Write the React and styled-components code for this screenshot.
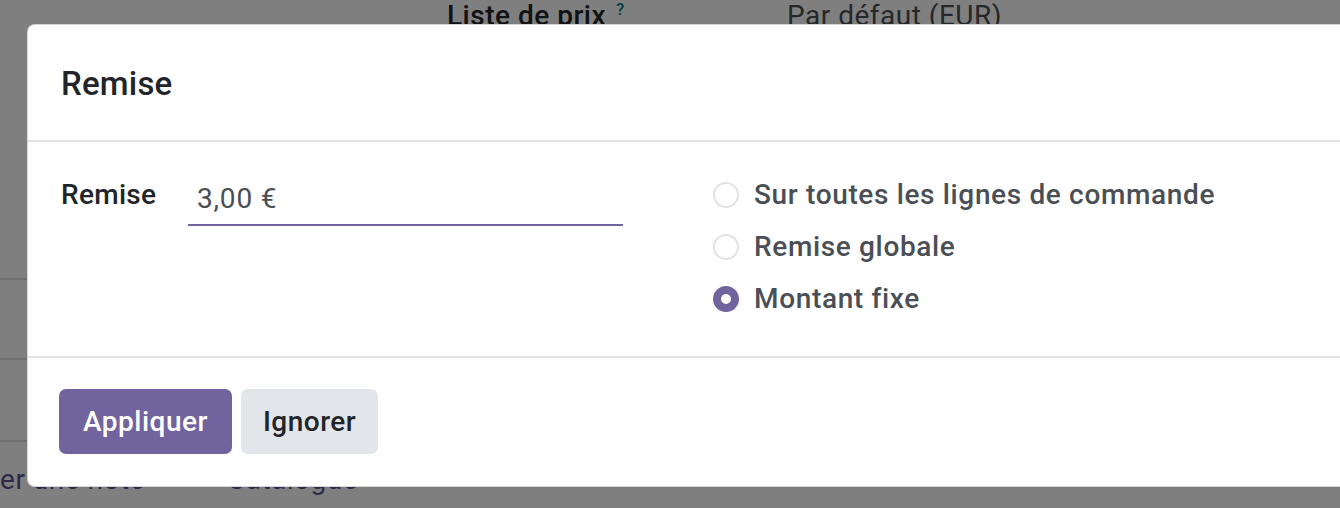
import React from 'react';
import styled, { createGlobalStyle } from 'styled-components';

const Global = createGlobalStyle`
  html, body {
    margin: 0;
    padding: 0;
    width: 1340px;
    height: 508px;
    overflow: hidden;
    background: #fff;
    font-family: Roboto, "Noto Sans", Arial, sans-serif;
  }
  * { box-sizing: border-box; }
`;

const Page = styled.div`
  position: relative;
  width: 1340px;
  height: 508px;
  overflow: hidden;
  background: #fff;
`;

/* ---------- underlying form (dimmed by the backdrop) ---------- */
const Sheet = styled.div`
  display: flex;
  flex-direction: column;
  margin-top: -5px;
  margin-left: -68px;
  width: 1500px;
  font-size: 28px;
  line-height: 42px;
  letter-spacing: 0.5px;
`;

const FieldRow = styled.div`
  display: grid;
  grid-template-columns: 340px 1fr;
  padding-left: 515px;
`;

const FieldLabel = styled.div`
  font-weight: 500;
  color: #212529;
  white-space: nowrap;
`;

const Help = styled.sup`
  font-size: 17px;
  font-weight: 500;
  color: #017e84;
  margin-left: 10px;
  vertical-align: top;
  line-height: 1;
  position: relative;
  top: 6px;
`;

const FieldValue = styled.div`
  color: #4a4f55;
  white-space: nowrap;
`;

const Lines = styled.div`
  margin-top: 241px;
  display: flex;
  flex-direction: column;
`;

const LineRow = styled.div`
  height: ${p => p.$h}px;
  border-top: 2px solid #dee2e6;
`;

const AddRow = styled.div`
  border-top: 2px solid #dee2e6;
  padding-top: 17px;
  display: flex;
  gap: 82px;
`;

const AddLink = styled.span`
  color: #5f5390;
  white-space: nowrap;
`;

const Backdrop = styled.div`
  position: absolute;
  inset: 0;
  background: rgba(0, 0, 0, 0.5);
`;

/* ---------- dialog ---------- */
const Dialog = styled.div`
  position: absolute;
  left: 27px;
  top: 24px;
  width: 1420px;
  background: #fff;
  border: 1px solid rgba(0, 0, 0, 0.16);
  border-radius: 8px;
  overflow: hidden;
  display: flex;
  flex-direction: column;
`;

const Header = styled.div`
  padding: 39px 33px 36px;
  border-bottom: 2px solid #dee2e6;
`;

const Title = styled.h4`
  margin: 0;
  font-size: 33px;
  line-height: 40px;
  font-weight: 500;
  color: #212529;
  letter-spacing: 0.2px;
`;

const Body = styled.div`
  display: flex;
  padding: 32px 33px 36px;
  font-size: 28px;
  line-height: 42px;
`;

const Group = styled.div`
  display: grid;
  grid-template-columns: 127px 435px;
  align-items: start;
  margin-right: 90px;
`;

const Label = styled.label`
  font-weight: 500;
  color: #212529;
  letter-spacing: 0.3px;
`;

const Input = styled.div`
  padding: 4px 9px;
  border-bottom: 2px solid #71639e;
  color: #4a4f55;
  font-weight: 400;
  letter-spacing: 0.8px;
`;

const RadioList = styled.div`
  display: flex;
  flex-direction: column;
  gap: 10px;
`;

const RadioItem = styled.div`
  display: flex;
  align-items: center;
  gap: 15px;
  color: #4a4f55;
  font-weight: 500;
  letter-spacing: 0.65px;
  white-space: nowrap;
`;

const RadioCircle = styled.span`
  width: 26px;
  height: 26px;
  border-radius: 50%;
  flex: none;
  background: #fff;
  border: ${p => (p.$checked ? '8px solid #71639e' : '2px solid #e0e3e6')};
`;

const Footer = styled.div`
  display: flex;
  gap: 9px;
  padding: 31px 31px 32px;
  border-top: 2px solid #dee2e6;
`;

const Button = styled.button`
  height: 65px;
  padding: 0 ${p => (p.$primary ? 24 : 22)}px;
  border: none;
  border-radius: 7px;
  font-family: Roboto, "Noto Sans", Arial, sans-serif;
  font-size: 28px;
  font-weight: 500;
  letter-spacing: 0.5px;
  background: ${p => (p.$primary ? '#71639e' : '#e2e5e9')};
  color: ${p => (p.$primary ? '#fff' : '#212529')};
`;

const options = [
  { label: 'Sur toutes les lignes de commande', checked: false },
  { label: 'Remise globale', checked: false },
  { label: 'Montant fixe', checked: true },
];

export default function App() {
  return (
    <Page>
      <Global />
      <Sheet>
        <FieldRow>
          <FieldLabel>
            Liste de prix<Help>?</Help>
          </FieldLabel>
          <FieldValue>Par défaut (EUR)</FieldValue>
        </FieldRow>
        <Lines>
          <LineRow $h={80} />
          <LineRow $h={82} />
          <AddRow>
            <AddLink>Ajouter une note</AddLink>
            <AddLink>Catalogue</AddLink>
          </AddRow>
        </Lines>
      </Sheet>
      <Backdrop />
      <Dialog>
        <Header>
          <Title>Remise</Title>
        </Header>
        <Body>
          <Group>
            <Label>Remise</Label>
            <Input>3,00 €</Input>
          </Group>
          <RadioList>
            {options.map(o => (
              <RadioItem key={o.label}>
                <RadioCircle $checked={o.checked} />
                {o.label}
              </RadioItem>
            ))}
          </RadioList>
        </Body>
        <Footer>
          <Button $primary>Appliquer</Button>
          <Button>Ignorer</Button>
        </Footer>
      </Dialog>
    </Page>
  );
}
